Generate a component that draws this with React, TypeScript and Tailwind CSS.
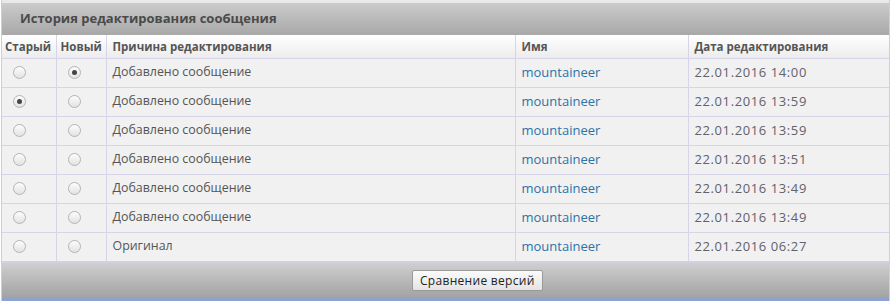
import React, { useState } from 'react';

type Row = { reason: string; name: string; date: string };

const rows: Row[] = [
  { reason: 'Добавлено сообщение', name: 'mountaineer', date: '22.01.2016 14:00' },
  { reason: 'Добавлено сообщение', name: 'mountaineer', date: '22.01.2016 13:59' },
  { reason: 'Добавлено сообщение', name: 'mountaineer', date: '22.01.2016 13:59' },
  { reason: 'Добавлено сообщение', name: 'mountaineer', date: '22.01.2016 13:51' },
  { reason: 'Добавлено сообщение', name: 'mountaineer', date: '22.01.2016 13:49' },
  { reason: 'Добавлено сообщение', name: 'mountaineer', date: '22.01.2016 13:49' },
  { reason: 'Оригинал', name: 'mountaineer', date: '22.01.2016 06:27' },
];

const Radio: React.FC<{ checked: boolean; onClick: () => void }> = ({ checked, onClick }) => (
  <button
    onClick={onClick}
    className="w-[13px] h-[13px] rounded-full border border-[#b4b4b4] bg-gradient-to-b from-[#fdfdfd] to-[#e2e2e2] flex items-center justify-center"
  >
    {checked && <span className="w-[5px] h-[5px] rounded-full bg-[#444]" />}
  </button>
);

const App: React.FC = () => {
  const [oldIdx, setOldIdx] = useState(1);
  const [newIdx, setNewIdx] = useState(0);

  return (
    <div className="w-[891px] h-[303px] bg-white" style={{ fontFamily: '"Open Sans", sans-serif' }}>
      <div className="border-x border-[#cfcfcf] mx-[1px]">
        <div className="h-[3px] bg-[#e9e9e9]" />
        <div className="h-[32px] bg-gradient-to-b from-[#cbcbcb] to-[#a8a8a8] flex items-center pl-[18px]">
          <h2 className="text-[13px] font-bold text-[#4a4a4a]">История редактирования сообщения</h2>
        </div>
        <table className="w-full border-collapse text-[13px]">
          <thead>
            <tr className="h-[23px] bg-gradient-to-b from-white to-[#ececec] text-[#555] text-[11.5px] font-bold text-left">
              <th className="w-[54px] pl-[3px] border-r border-[#d8d4e8]">Старый</th>
              <th className="w-[50px] pl-[4px] border-r border-[#d8d4e8]">Новый</th>
              <th className="w-[409px] pl-[6px] border-r border-[#d8d4e8]">Причина редактирования</th>
              <th className="w-[173px] pl-[6px] border-r border-[#d8d4e8]">Имя</th>
              <th className="pl-[6px]">Дата редактирования</th>
            </tr>
          </thead>
          <tbody>
            {rows.map((r, i) => (
              <tr key={i} className="h-[29px] bg-[#f1f1f1] border-t border-[#d8d4e8]">
                <td className="pl-[11px] border-r border-[#d8d4e8]">
                  <Radio checked={oldIdx === i} onClick={() => setOldIdx(i)} />
                </td>
                <td className="pl-[11px] border-r border-[#d8d4e8]">
                  <Radio checked={newIdx === i} onClick={() => setNewIdx(i)} />
                </td>
                <td className="pl-[6px] text-[12.4px] text-[#555] border-r border-[#d8d4e8]">{r.reason}</td>
                <td className="pl-[6px] text-[#2b73a8] border-r border-[#d8d4e8]">
                  <a href="#">{r.name}</a>
                </td>
                <td className="pl-[6px] text-[#62616e] tracking-[0.6px]">{r.date}</td>
              </tr>
            ))}
          </tbody>
        </table>
        <div className="border-t-[2px] border-[#d4d0e2] h-[2px] bg-[#e8e8e8]" />
        <div className="h-[35px] bg-gradient-to-b from-[#cfcfcf] to-[#a2a2a2] flex items-center pl-[410px]">
          <button className="h-[21px] px-[7px] border border-[#9a9a9a] rounded-[2px] bg-gradient-to-b from-[#fbfbfb] to-[#e4e4e4] text-[12px] text-[#222] leading-none tracking-[0.3px]">
            Сравнение версий
          </button>
        </div>
        <div className="h-[3px] bg-[#8da2cf]" />
      </div>
    </div>
  );
};

export default App;
